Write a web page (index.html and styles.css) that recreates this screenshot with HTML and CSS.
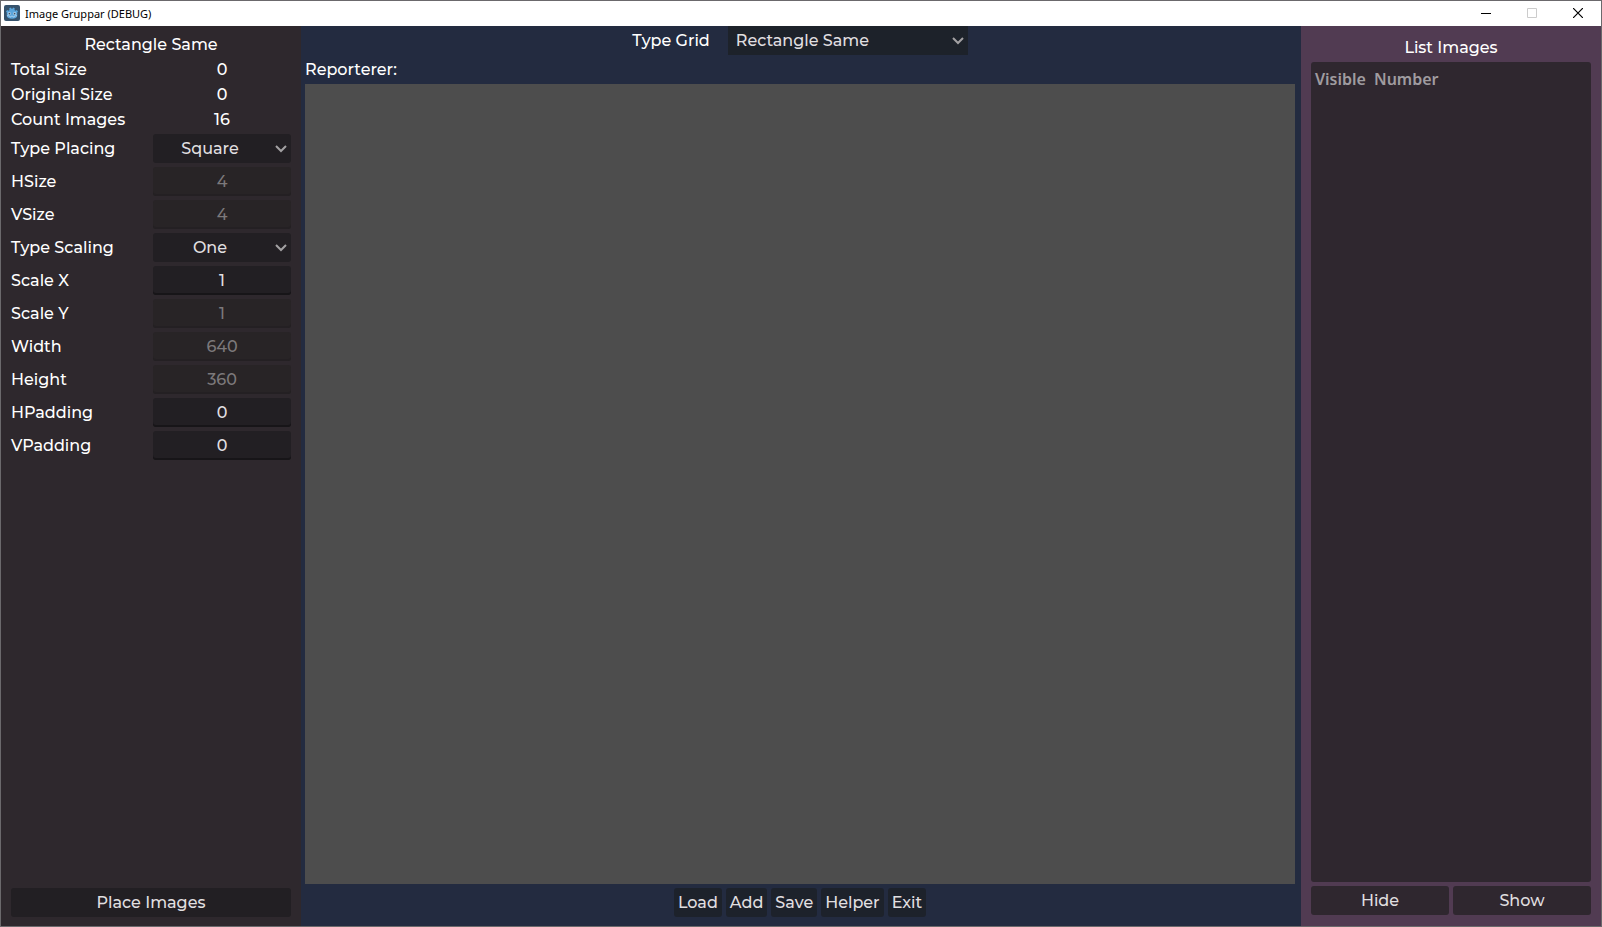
FILE: index.html
```html
<!DOCTYPE html>
<html lang="en">
<head>
    <meta charset="UTF-8" />
    <meta name="viewport" content="width=device-width, initial-scale=1" />
    <title>Image Gruppar (DEBUG)</title>
    <link rel="stylesheet" href="styles.css">
</head>
<body>
    <div class="window">
        <header class="titlebar">
            <svg class="app-icon" width="16" height="16" viewBox="0 0 16 16">
                <rect width="16" height="16" rx="2" fill="#36526c" />
                <path d="M2 6.500 L3.200 4.900 L4.500 5.700 L5.500 5.100 L5.300 3.200 L7 2.400 L7.500 3.800 H8.500 L9 2.400 L10.700 3.200 L10.500 5.100 L11.500 5.700 L12.800 4.900 L14 6.500 L13.200 7.400 V11 C13.200 12.600 11 13.700 8 13.700 S2.800 12.600 2.800 11 V7.400 Z" fill="#5aa5dc" />
                <circle cx="5.300" cy="8.500" r="1.500" fill="#c3dcf0" />
                <circle cx="10.700" cy="8.500" r="1.500" fill="#c3dcf0" />
                <circle cx="5.400" cy="8.600" r="0.900" fill="#36526c" />
                <circle cx="10.600" cy="8.600" r="0.900" fill="#36526c" />
                <path d="M3 10.700 L5.500 10.900 L5.800 12 H7 L7.300 11.100 H8.700 L9 12 H10.200 L10.500 10.900 L13 10.700" fill="none" stroke="#c3dcf0" stroke-width="0.700" />
            </svg>
            <span class="app-name">Image Gruppar (DEBUG)</span>
            <button class="win-btn" aria-label="Minimize">
                <svg width="10" height="10" viewBox="0 0 10 10"><path d="M0 5.500h10" stroke="#000" /></svg>
            </button>
            <button class="win-btn" aria-label="Maximize" disabled>
                <svg width="10" height="10" viewBox="0 0 10 10"><path d="M.5.500h9v9h-9z" fill="none" stroke="#ccc" /></svg>
            </button>
            <button class="win-btn" aria-label="Close">
                <svg width="10" height="10" viewBox="0 0 10 10"><path d="M0 0l10 10M10 0L0 10" stroke="#000" stroke-width="1.200" /></svg>
            </button>
        </header>

        <main class="main">
            <section class="settings">
                <h2 class="title">Rectangle Same</h2>
                <div class="row"><span>Total Size</span><span class="value">0</span></div>
                <div class="row"><span>Original Size</span><span class="value">0</span></div>
                <div class="row"><span>Count Images</span><span class="value">16</span></div>
                <div class="row">
                    <label for="placing">Type Placing</label>
                    <div class="option">
                        <select id="placing"><option>Square</option></select>
                        <svg class="arrow" width="12" height="8" viewBox="0 0 12 8"><path d="M1 1l5 5 5-5" /></svg>
                    </div>
                </div>
                <div class="row"><label for="hsize">HSize</label><input id="hsize" type="text" value="4" disabled /></div>
                <div class="row"><label for="vsize">VSize</label><input id="vsize" type="text" value="4" disabled /></div>
                <div class="row">
                    <label for="scaling">Type Scaling</label>
                    <div class="option">
                        <select id="scaling"><option>One</option></select>
                        <svg class="arrow" width="12" height="8" viewBox="0 0 12 8"><path d="M1 1l5 5 5-5" /></svg>
                    </div>
                </div>
                <div class="row"><label for="scaleX">Scale X</label><input id="scaleX" type="text" value="1" /></div>
                <div class="row"><label for="scaleY">Scale Y</label><input id="scaleY" type="text" value="1" disabled /></div>
                <div class="row"><label for="width">Width</label><input id="width" type="text" value="640" disabled /></div>
                <div class="row"><label for="height">Height</label><input id="height" type="text" value="360" disabled /></div>
                <div class="row"><label for="hpadding">HPadding</label><input id="hpadding" type="text" value="0" /></div>
                <div class="row"><label for="vpadding">VPadding</label><input id="vpadding" type="text" value="0" /></div>
                <button class="button place">Place Images</button>
            </section>

            <section class="center">
                <div class="grid-type">
                    <label for="grid">Type Grid</label>
                    <div class="option wide">
                        <select id="grid"><option>Rectangle Same</option></select>
                        <svg class="arrow" width="12" height="8" viewBox="0 0 12 8"><path d="M1 1l5 5 5-5" /></svg>
                    </div>
                </div>
                <div class="reporter">Reporterer:</div>
                <div class="preview"></div>
                <div class="actions">
                    <button class="button">Load</button>
                    <button class="button">Add</button>
                    <button class="button">Save</button>
                    <button class="button">Helper</button>
                    <button class="button">Exit</button>
                </div>
            </section>

            <section class="images">
                <h2 class="title">List Images</h2>
                <div class="list">
                    <table>
                        <thead><tr><th>Visible</th><th>Number</th></tr></thead>
                    </table>
                </div>
                <div class="list-buttons">
                    <button class="button">Hide</button>
                    <button class="button">Show</button>
                </div>
            </section>
        </main>
    </div>
</body>
</html>
```

FILE: styles.css
```css
* {
    box-sizing: border-box;
}
body {
    margin: 0;
    font-family: Montserrat, Inter, sans-serif;
    font-size: 16px;
    font-weight: 500;
    line-height: 21px;
    color: white;
}
.window {
    display: flex;
    flex-direction: column;
    height: 100vh;
    border: 1px solid #6b696c;
}
.titlebar {
    display: flex;
    align-items: center;
    height: 25px;
    padding: 0 0 1px 3px;
    background-color: white;
    color: black;
}
.app-name {
    flex: 1;
    margin-left: 5px;
    font-family: "Segoe UI", "Noto Sans", sans-serif;
    font-size: 11px;
    font-weight: 400;
}
.win-btn {
    display: flex;
    align-items: center;
    justify-content: center;
    width: 46px;
    height: 24px;
    padding: 0;
    border: none;
    background: none;
}
.main {
    flex: 1;
    display: flex;
    min-height: 0;
}
.settings {
    display: flex;
    flex-direction: column;
    gap: 4px;
    width: 300px;
    padding: 8px 10px 9px;
    background-color: #2e282d;
}
.title {
    margin: 0;
    font-size: 16px;
    font-weight: 500;
    text-align: center;
}
.row {
    display: grid;
    grid-template-columns: 1fr 1fr;
    gap: 4px;
    align-items: center;
}
.value {
    text-align: center;
}
input, select, .button {
    width: 100%;
    height: 29px;
    margin: 0;
    padding: 0 4px;
    border: none;
    border-radius: 3px;
    background-color: #221f23;
    color: #e0dfe0;
    font: inherit;
    text-align: center;
}
input {
    box-shadow: inset 0 -2px #171518;
}
input:disabled {
    box-shadow: inset 0 -2px #242023;
    background-color: #282426;
    color: #7c797b;
}
.option {
    display: grid;
    align-items: center;
}
.option select, .arrow {
    grid-area: 1 / 1;
}
select {
    appearance: none;
    padding-right: 28px;
    text-align-last: center;
}
.arrow {
    justify-self: end;
    margin-right: 4px;
    fill: none;
    stroke: #a3a1a3;
    stroke-width: 2;
    pointer-events: none;
}
.place {
    margin-top: auto;
}
.center {
    flex: 1;
    display: flex;
    flex-direction: column;
    gap: 4px;
    padding: 0 6px 9px 4px;
    background-color: #232b40;
}
.grid-type {
    display: flex;
    align-items: center;
    justify-content: center;
    gap: 18px;
}
.wide {
    width: 240px;
}
.wide select {
    padding-left: 8px;
    border-radius: 0;
    background-color: #1d222a;
    text-align-last: left;
}
.preview {
    flex: 1;
    background-color: #4d4d4d;
}
.actions {
    display: flex;
    justify-content: center;
    gap: 4px;
}
.actions .button {
    width: auto;
    background-color: #1d222b;
}
.images {
    display: flex;
    flex-direction: column;
    gap: 4px;
    width: 300px;
    padding: 11px 10px;
    background-color: #513b52;
}
.list {
    flex: 1;
    padding: 7px 4px;
    border-radius: 3px;
    background-color: #2f272f;
}
table {
    border-collapse: collapse;
}
th {
    padding: 0 8px 0 0;
    color: #a09ca0;
    font-family: "Noto Sans", sans-serif;
    font-weight: 600;
    text-align: left;
}
.list-buttons {
    display: flex;
    gap: 4px;
}
.images .button {
    background-color: #2f272f;
}
```
